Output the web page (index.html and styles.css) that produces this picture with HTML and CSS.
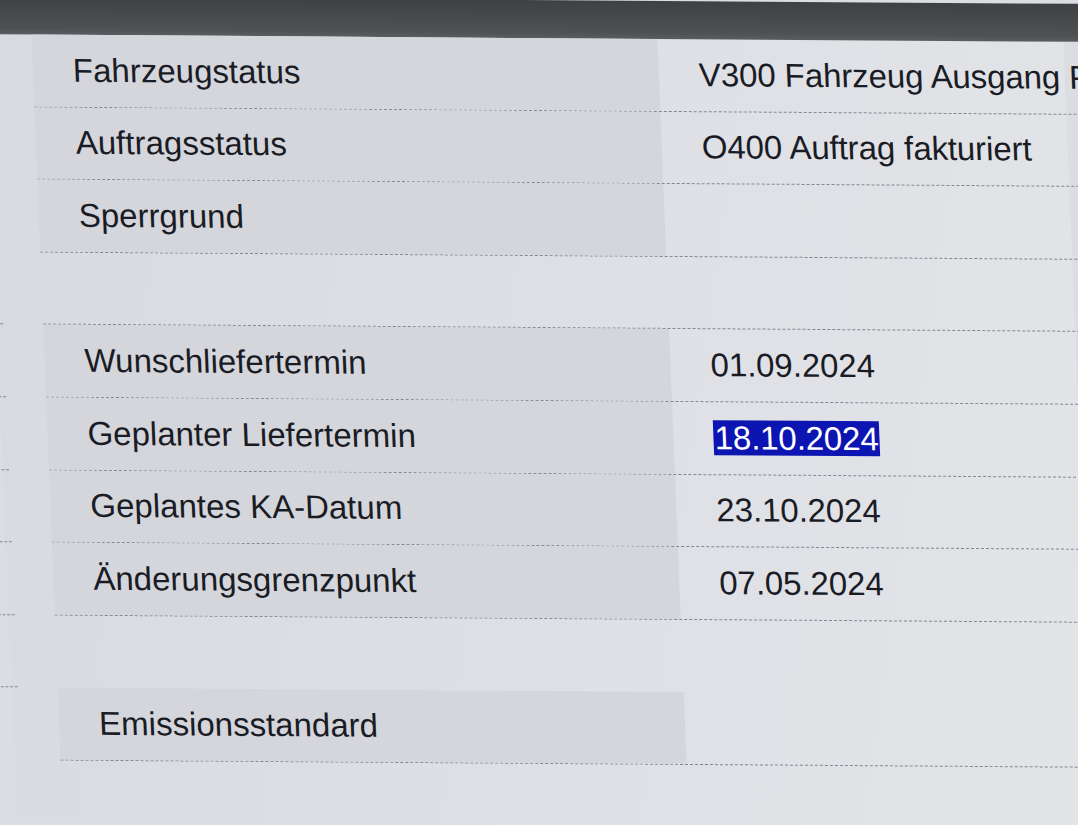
FILE: index.html
```html
<!DOCTYPE html>
<html lang="de">
<head>
  <meta charset="UTF-8" />
  <meta name="viewport" content="width=device-width, initial-scale=1.0"/>
  <title>Fahrzeugdaten</title>
  <link rel="stylesheet" href="styles.css">
</head>
<body>

  <div class="screen">
    <div class="topbar"></div>

    <div class="rows">
      <div class="row">
        <span class="stub"></span>
        <div class="field">
          <div class="label">Fahrzeugstatus</div>
          <div class="value">V300 Fahrzeug Ausgang P</div>
        </div>
      </div>
      <div class="row">
        <span class="stub"></span>
        <div class="field">
          <div class="label">Auftragsstatus</div>
          <div class="value">O400 Auftrag fakturiert</div>
        </div>
      </div>
      <div class="row">
        <span class="stub"></span>
        <div class="field">
          <div class="label">Sperrgrund</div>
          <div class="value"></div>
        </div>
      </div>
      <div class="row blank">
        <span class="stub"></span>
        <div class="field">
          <div class="label"></div>
          <div class="value"></div>
        </div>
      </div>

      <div class="row">
        <span class="stub"></span>
        <div class="field">
          <div class="label">Wunschliefertermin</div>
          <div class="value">01.09.2024</div>
        </div>
      </div>
      <div class="row">
        <span class="stub"></span>
        <div class="field">
          <div class="label">Geplanter Liefertermin</div>
          <div class="value"><span class="selected">18.10.2024</span></div>
        </div>
      </div>
      <div class="row">
        <span class="stub"></span>
        <div class="field">
          <div class="label">Geplantes KA-Datum</div>
          <div class="value">23.10.2024</div>
        </div>
      </div>
      <div class="row">
        <span class="stub"></span>
        <div class="field">
          <div class="label">Änderungsgrenzpunkt</div>
          <div class="value">07.05.2024</div>
        </div>
      </div>
      <div class="row blank open">
        <span class="stub"></span>
        <div class="field">
          <div class="label"></div>
          <div class="value"></div>
        </div>
      </div>

      <div class="row last">
        <span class="stub"></span>
        <div class="field">
          <div class="label">Emissionsstandard</div>
          <div class="value"></div>
        </div>
      </div>
    </div>
  </div>

</body>
</html>
```

FILE: styles.css
```css
* {
  box-sizing: border-box;
}

html, body {
  height: 100%;
}

body {
  margin: 0;
  overflow: hidden;
  font-family: 'Liberation Sans', Arial, sans-serif;
  background: #dcdde2;
  color: #1a1c25;
}

/* the photo is taken at a slight angle */
.screen {
  width: 1078px;
  height: 825px;
  transform-origin: 540px 400px;
  transform: skew(2.3deg, 0.4deg);
  background: linear-gradient(100deg, #d9dadf 0%, #dfe0e5 55%, #e3e4e8 100%);
}

.topbar {
  height: 38px;
  margin: 0 -80px;
  background: linear-gradient(180deg, #3f4043, #505154 85%, #5b5c60);
}

.row {
  display: flex;
  height: 72.6px;
}

.stub {
  width: 26px;
  margin-left: -20px;
  margin-right: 40px;
  border-bottom: 1px dashed #85878e;
}

.row.last .stub {
  border-bottom-color: transparent;
}

.field {
  flex: 1;
  min-width: 0;
  display: flex;
  border-bottom: 1px dashed #85878e;
  margin-right: -80px;
}

.row.open .field {
  border-bottom: none;
}

.label {
  width: 626px;
  flex-shrink: 0;
  display: flex;
  align-items: center;
  padding-left: 40px;
  font-size: 33px;
  background: #d5d6db;
}

.row.blank .label {
  background: none;
}

.value {
  flex: 1;
  min-width: 0;
  display: flex;
  align-items: center;
  padding-left: 40px;
  font-size: 33px;
  letter-spacing: -0.1px;
  white-space: nowrap;
  overflow: hidden;
}

.selected {
  display: inline-block;
  line-height: 35px;
  padding: 0 1px;
  background: #0c14b2;
  color: #fff;
}
```
